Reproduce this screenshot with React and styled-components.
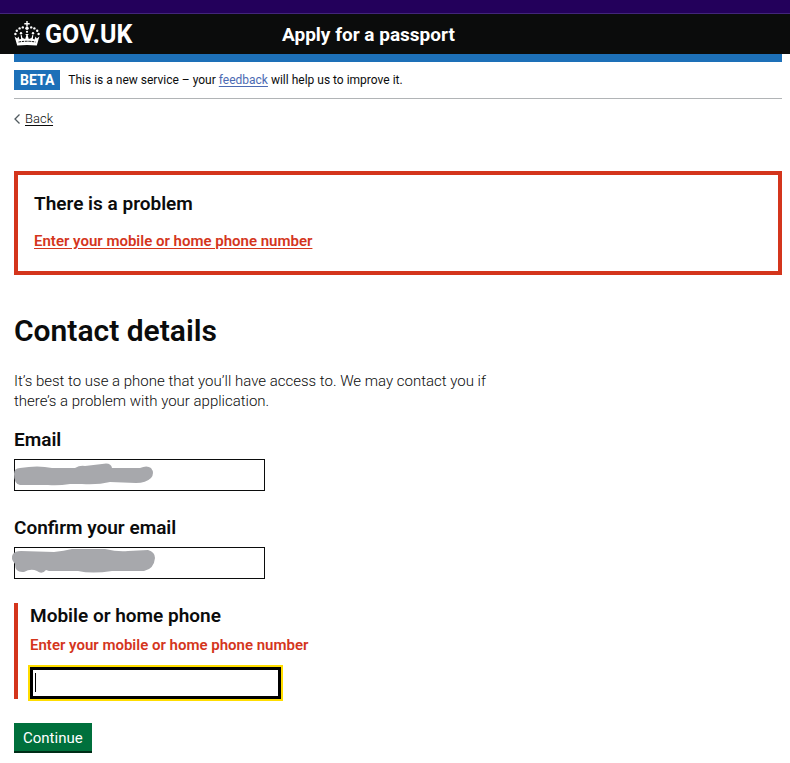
import React from 'react';
import styled, { createGlobalStyle } from 'styled-components';

const COLORS = {
  black: '#0b0c0c',
  blue: '#1d70b8',
  red: '#d4351c',
  green: '#00703c',
  greenShadow: '#002d18',
  yellow: '#ffdd00',
  border: '#b1b4b6',
  scribble: '#a7a8ac',
};

const WEIGHTS = {
  light: 350,
  semibold: 600,
  bold: 700,
};

const App = () => {
  return (
    <>
      <GlobalStyle />
      <BrowserStrip />
      <Header>
        <HeaderInner>
          <LogoLink href="#home">
            <Crown />
            GOV.UK
          </LogoLink>
          <ServiceLink href="#service">Apply for a passport</ServiceLink>
        </HeaderInner>
      </Header>
      <Container>
        <PhaseBanner>
          <Tag>BETA</Tag>
          <span>
            This is a new service – your <FeedbackLink href="#feedback">feedback</FeedbackLink> will help us to improve it.
          </span>
        </PhaseBanner>
        <BackLink href="#back">
          <svg width="6" height="10" viewBox="0 0 6 10" fill="none" stroke="#505a5f" strokeWidth="1.3" aria-hidden="true">
            <path d="M5.5 .5 1 5l4.500 4.500" />
          </svg>
          <span>Back</span>
        </BackLink>
        <main>
          <ErrorSummary role="alert">
            <SummaryTitle>There is a problem</SummaryTitle>
            <SummaryLink href="#phone">Enter your mobile or home phone number</SummaryLink>
          </ErrorSummary>
          <Title>Contact details</Title>
          <Intro>
            It’s best to use a phone that you’ll have access to. We may contact you if there’s a problem with your application.
          </Intro>
          <form onSubmit={(event) => event.preventDefault()}>
            <Field>
              <Label htmlFor="email">Email</Label>
              <InputWrapper>
                <Input id="email" type="email" />
                <Scribble d="M4 15Q4 9 10 9Q28 6 42 9H65Q70 6 75 7L92 5Q101 3 102 9H130Q137 6 141 9Q145 14 141 19Q136 24 126 24L100 23Q88 26 72 25H60Q48 27 38 26H10Q4 25 4 15Z" />
              </InputWrapper>
            </Field>
            <Field>
              <Label htmlFor="confirm-email">Confirm your email</Label>
              <InputWrapper>
                <Input id="confirm-email" type="email" />
                <Scribble d="M5 17Q0 11 3 7Q5 4 11 4L44 5Q54 4 62 2H95Q108 5 118 4L138 3Q145 5 145 11Q144 22 134 24L102 24Q82 27 68 24H39L36 23Q32 28 27 24Q21 21 14 25Q5 26 5 17Z" />
              </InputWrapper>
            </Field>
            <Field $invalid>
              <Label htmlFor="phone">Mobile or home phone</Label>
              <ErrorMessage id="phone-error">Enter your mobile or home phone number</ErrorMessage>
              <Input id="phone" type="tel" aria-describedby="phone-error" aria-invalid="true" $active />
            </Field>
            <Button type="submit">Continue</Button>
          </form>
        </main>
      </Container>
    </>
  );
};

const Crown = () => (
  <svg width="26" height="25" viewBox="0 0 26 25" fill="#fff" aria-hidden="true">
    <path d="M12.300 0h1.400v2h2v1.500h-2v2h-1.400v-2h-2V2h2z" />
    <circle cx="13" cy="7.300" r="1.700" />
    <circle cx="8.800" cy="6.400" r="1.200" />
    <circle cx="5.600" cy="7.400" r="1.200" />
    <circle cx="2.800" cy="9.800" r="1.200" />
    <circle cx="1.400" cy="13" r="1.200" />
    <circle cx="17.200" cy="6.400" r="1.200" />
    <circle cx="20.400" cy="7.400" r="1.200" />
    <circle cx="23.200" cy="9.800" r="1.200" />
    <circle cx="24.600" cy="13" r="1.200" />
    <circle cx="13" cy="10.800" r="1.100" />
    <circle cx="7" cy="12.200" r="1.200" />
    <circle cx="19" cy="12.200" r="1.200" />
    <path d="M.6 15.500l2.600 1.900 1.200-2 1.200 3.200 1.500-.9-.4-3.700h.9l.9 2.900 2.700 1 1.100-3.300-1-1.500h3.400l-1 1.500 1.100 3.300 2.700-1 .9-2.900h.9l-.4 3.700 1.500.9 1.200-3.200 1.200 2 2.600-1.900L22.800 24.500q-9.800-1-19.600 0z" />
    <path d="M4.500 21q8.500-1.500 17 0" fill="none" stroke="#0b0c0c" strokeWidth="1" strokeDasharray="2.500 .8" />
  </svg>
);

const Scribble = ({ d }) => (
  <ScribbleSvg width="148" height="32" viewBox="0 0 148 32" aria-hidden="true">
    <path d={d} fill={COLORS.scribble} />
  </ScribbleSvg>
);

const GlobalStyle = createGlobalStyle`
  *, *::before, *::after {
    box-sizing: border-box;
  }

  body {
    margin: 0;
    background: #fff;
    color: ${COLORS.black};
    font-family: Roboto, "Liberation Sans", sans-serif;
    font-size: 15px;
    line-height: 20px;
  }
`;

const BrowserStrip = styled.div`
  height: 14px;
  background: #23005b;
  border-bottom: 1px solid #42257a;
`;

const Header = styled.header`
  padding: 0 8px 0 14px;
  background: ${COLORS.black};
  color: #fff;
`;

const HeaderInner = styled.div`
  display: grid;
  grid-template-columns: 1fr 2fr;
  gap: 18px;
  align-items: center;
  height: 40px;
  padding-top: 2px;
`;

const LogoLink = styled.a`
  display: flex;
  align-items: center;
  gap: 5px;
  color: inherit;
  font-size: 25px;
  font-weight: ${WEIGHTS.bold};
  text-decoration: none;

  svg {
    margin-bottom: 4px;
  }
`;

const ServiceLink = styled.a`
  color: inherit;
  font-size: 19px;
  font-weight: ${WEIGHTS.bold};
  text-decoration: none;
`;

const Container = styled.div`
  margin: 0 8px 0 14px;
  padding-bottom: 8px;
  border-top: 8px solid ${COLORS.blue};
`;

const PhaseBanner = styled.div`
  display: flex;
  align-items: center;
  gap: 8px;
  padding: 8px 0;
  border-bottom: 1px solid ${COLORS.border};
  font-size: 12px;
`;

const Tag = styled.strong`
  padding: 0 6px;
  background: ${COLORS.blue};
  color: #fff;
  font-size: 14px;
  font-weight: ${WEIGHTS.bold};
`;

const FeedbackLink = styled.a`
  color: #4c6ab3;
  text-underline-offset: 2px;
`;

const BackLink = styled.a`
  display: inline-flex;
  align-items: center;
  gap: 5px;
  margin-top: 10px;
  color: inherit;
  font-size: 13px;
  font-weight: ${WEIGHTS.light};
  text-decoration: none;

  span {
    text-decoration: underline;
    text-underline-offset: 2px;
  }
`;

const ErrorSummary = styled.div`
  margin-top: 42px;
  padding: 16px 16px 20px;
  border: 4px solid ${COLORS.red};
`;

const SummaryTitle = styled.h2`
  margin: 0 0 15px;
  font-size: 19px;
  font-weight: ${WEIGHTS.semibold};
  line-height: 25px;
`;

const SummaryLink = styled.a`
  display: block;
  color: ${COLORS.red};
  font-weight: ${WEIGHTS.semibold};
  text-underline-offset: 2px;
`;

const Title = styled.h1`
  margin: 40px 0 24px;
  font-size: 30px;
  font-weight: ${WEIGHTS.semibold};
  line-height: 32px;
`;

const Intro = styled.p`
  max-width: 500px;
  margin: 0 0 16px;
  font-weight: ${WEIGHTS.light};
`;

const Field = styled.div`
  margin-bottom: 24px;
  padding-left: ${(p) => (p.$invalid ? '12px' : '0')};
  border-left: ${(p) => (p.$invalid ? `4px solid ${COLORS.red}` : 'none')};
`;

const Label = styled.label`
  display: block;
  margin-bottom: 7px;
  font-size: 19px;
  font-weight: ${WEIGHTS.semibold};
  line-height: 25px;
`;

const ErrorMessage = styled.p`
  margin: 0 0 12px;
  color: ${COLORS.red};
  font-weight: ${WEIGHTS.semibold};
`;

const InputWrapper = styled.div`
  position: relative;
`;

const Input = styled.input`
  display: block;
  width: 100%;
  max-width: 251px;
  height: 32px;
  padding: 4px;
  border: 1px solid ${COLORS.black};
  border-radius: 0;
  background: #fff;
  font: inherit;

  ${(p) => p.$active && `
    border: 3px solid #000;
    outline: 2px solid ${COLORS.yellow};
    background: linear-gradient(#000, #000) 2px 3px / 1px 19px no-repeat #fff;
  `}
`;

const ScribbleSvg = styled.svg`
  position: absolute;
  top: 0;
  left: -4px;
`;

const Button = styled.button`
  display: block;
  height: 30px;
  padding: 0 9px;
  border: 0;
  background: ${COLORS.green};
  box-shadow: inset 0 -2px 0 ${COLORS.greenShadow};
  color: #fff;
  font: inherit;
  cursor: pointer;
`;

export default App;
